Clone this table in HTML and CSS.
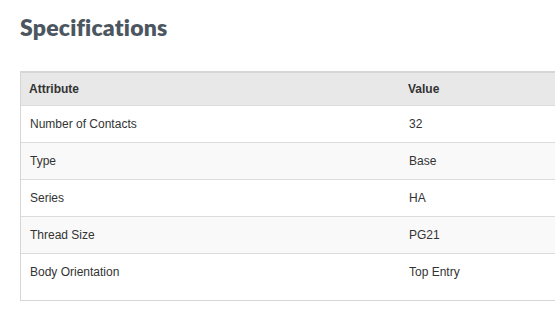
FILE: index.html
```html
<!DOCTYPE html>
<html>
<head>
<meta charset="utf-8">
<link rel="stylesheet" href="styles.css">
</head>
<body>
<div class="page">
  <h2 class="title">Specifications</h2>
  <div class="spec-box">
    <table class="spec-table">
      <thead>
        <tr><th class="col-attr">Attribute</th><th>Value</th></tr>
      </thead>
      <tbody>
        <tr><td>Number of Contacts</td><td>32</td></tr>
        <tr><td>Type</td><td>Base</td></tr>
        <tr><td>Series</td><td>HA</td></tr>
        <tr><td>Thread Size</td><td>PG21</td></tr>
        <tr><td>Body Orientation</td><td>Top Entry</td></tr>
      </tbody>
    </table>
  </div>
</div>
</body>
</html>
```
FILE: styles.css
```css
html, body {
  margin: 0;
  padding: 0;
  background: #fff;
}
.page {
  padding: 10px 0 0 20px;
}
.title {
  margin: 0;
  font-family: "Lato", "DejaVu Sans", sans-serif;
  font-weight: 800;
  font-size: 23px;
  line-height: 34px;
  color: #4b5660;
  letter-spacing: 0.2px;
}
.spec-box {
  margin-top: 27px;
  border: 1px solid #d6d6d6;
  border-top: 2px solid #d6d6d6;
  border-right: none;
  padding-bottom: 10px;
}
.spec-table {
  width: 100%;
  border-collapse: collapse;
  font-family: "Liberation Sans", Arial, sans-serif;
  font-size: 12px;
  color: #333;
}
.spec-table th {
  text-align: left;
  font-weight: bold;
  background: #e8e8e8;
  height: 32px;
  padding: 0 8px;
  border-bottom: 1px solid #dcdcdc;
}
.spec-table th.col-attr {
  width: 363px;
}
.spec-table td {
  height: 36px;
  padding: 0 8px 0 9px;
  border-bottom: 1px solid #dcdcdc;
}
.spec-table tbody tr:nth-child(even) td {
  background: #f9f9f9;
}
.spec-table tbody tr:last-child td {
  border-bottom: none;
}
```
